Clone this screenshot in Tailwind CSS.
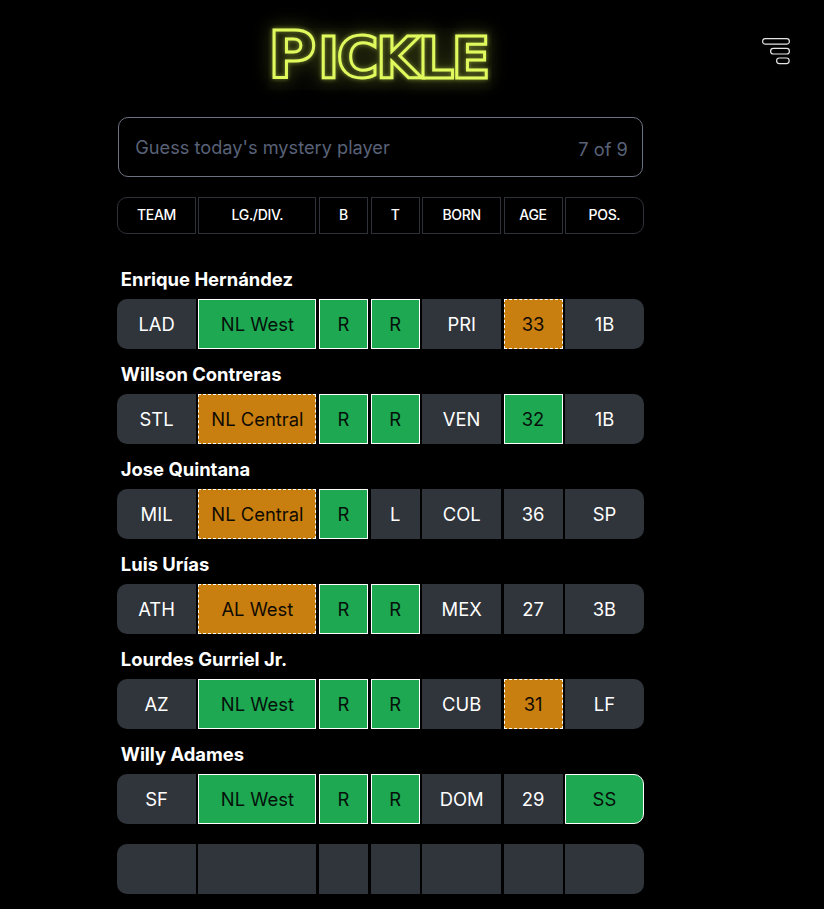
<!DOCTYPE html>
<html lang="en">
<head>
<meta charset="utf-8">
<title>Pickle</title>
<script src="https://cdn.jsdelivr.net/npm/@tailwindcss/browser@4"></script>
</head>
<body class="bg-black text-white font-['Inter','Lato',sans-serif] w-[824px] h-[909px] overflow-hidden">
<header class="relative h-[117px] w-full">
  <div class="absolute left-[268px] top-[28px] w-[224px] h-[62px] bg-[#050503]"></div>
  <div class="absolute left-[266px] top-[28px] w-[224px] h-[62px] flex items-baseline justify-center font-['DejaVu_Sans',sans-serif] font-bold leading-[56px] text-transparent [-webkit-text-stroke:3px_#e0fa5e] [filter:drop-shadow(0_0_2px_rgba(220,247,92,0.5))_drop-shadow(0_0_9px_rgba(200,230,60,0.45))]">
    <span class="text-[66px] tracking-[1.5px]">P</span><span class="text-[57px] tracking-[-2.5px]">ICKLE</span>
  </div>
  <svg class="absolute left-[761px] top-[37px]" width="30" height="30" viewBox="0 0 30 30" fill="none" stroke="#e5e5e5" stroke-width="1.2">
    <rect x="1.6" y="1.6" width="26.8" height="5.6" rx="2.8"/>
    <rect x="9.6" y="11.4" width="18.8" height="5.6" rx="2.8"/>
    <rect x="15.6" y="21" width="12.6" height="5.6" rx="2.8"/>
  </svg>
</header>
<main class="ml-[117.3px] w-[526.4px]">
  <div class="ml-[1px] w-[524.5px] h-[60px] border border-[#6b7280] rounded-[10px] flex items-center justify-between pl-4 pr-[14px] text-[18.2px] leading-[28px] text-[#596278]">
    <span>Guess today's mystery player</span>
    <span class="pt-[3px]">7 of 9</span>
  </div>

  <div class="grid grid-cols-[8fr_12fr_5fr_5fr_8fr_6fr_8fr] gap-[2.66px] h-[37px] mt-[20px] text-[14px] tracking-[-0.3px] font-medium">
    <div class="flex items-center justify-center pb-[2px] border border-[#2e3238] rounded-l-[10px]">TEAM</div>
    <div class="flex items-center justify-center pb-[2px] border border-[#2e3238]">LG./DIV.</div>
    <div class="flex items-center justify-center pb-[2px] border border-[#2e3238]">B</div>
    <div class="flex items-center justify-center pb-[2px] border border-[#2e3238]">T</div>
    <div class="flex items-center justify-center pb-[2px] border border-[#2e3238]">BORN</div>
    <div class="flex items-center justify-center pb-[2px] border border-[#2e3238]">AGE</div>
    <div class="flex items-center justify-center pb-[2px] border border-[#2e3238] rounded-r-[10px]">POS.</div>
  </div>

  <div class="mt-[32px] flex flex-col gap-[12px]">
    <section>
      <h2 class="h-[27px] pl-[3.5px] text-[18.4px] leading-[27px] font-bold">Enrique Hernández</h2>
      <div class="grid grid-cols-[8fr_12fr_5fr_5fr_8fr_6fr_8fr] gap-[2.66px] h-[50px] mt-[6px] text-[18.4px] leading-[28px]">
        <div class="flex items-center justify-center bg-[#30343b] rounded-l-[10px]">LAD</div>
        <div class="flex items-center justify-center bg-[#1da851] border border-white text-[#06100a]">NL West</div>
        <div class="flex items-center justify-center bg-[#1da851] border border-white text-[#06100a]">R</div>
        <div class="flex items-center justify-center bg-[#1da851] border border-white text-[#06100a]">R</div>
        <div class="flex items-center justify-center bg-[#30343b]">PRI</div>
        <div class="flex items-center justify-center bg-[#c97f10] border border-dashed border-white text-[#100b02]">33</div>
        <div class="flex items-center justify-center bg-[#30343b] rounded-r-[10px]">1B</div>
      </div>
    </section>
    <section>
      <h2 class="h-[27px] pl-[3.5px] text-[18.4px] leading-[27px] font-bold">Willson Contreras</h2>
      <div class="grid grid-cols-[8fr_12fr_5fr_5fr_8fr_6fr_8fr] gap-[2.66px] h-[50px] mt-[6px] text-[18.4px] leading-[28px]">
        <div class="flex items-center justify-center bg-[#30343b] rounded-l-[10px]">STL</div>
        <div class="flex items-center justify-center bg-[#c97f10] border border-dashed border-white text-[#100b02]">NL Central</div>
        <div class="flex items-center justify-center bg-[#1da851] border border-white text-[#06100a]">R</div>
        <div class="flex items-center justify-center bg-[#1da851] border border-white text-[#06100a]">R</div>
        <div class="flex items-center justify-center bg-[#30343b]">VEN</div>
        <div class="flex items-center justify-center bg-[#1da851] border border-white text-[#06100a]">32</div>
        <div class="flex items-center justify-center bg-[#30343b] rounded-r-[10px]">1B</div>
      </div>
    </section>
    <section>
      <h2 class="h-[27px] pl-[3.5px] text-[18.4px] leading-[27px] font-bold">Jose Quintana</h2>
      <div class="grid grid-cols-[8fr_12fr_5fr_5fr_8fr_6fr_8fr] gap-[2.66px] h-[50px] mt-[6px] text-[18.4px] leading-[28px]">
        <div class="flex items-center justify-center bg-[#30343b] rounded-l-[10px]">MIL</div>
        <div class="flex items-center justify-center bg-[#c97f10] border border-dashed border-white text-[#100b02]">NL Central</div>
        <div class="flex items-center justify-center bg-[#1da851] border border-white text-[#06100a]">R</div>
        <div class="flex items-center justify-center bg-[#30343b]">L</div>
        <div class="flex items-center justify-center bg-[#30343b]">COL</div>
        <div class="flex items-center justify-center bg-[#30343b]">36</div>
        <div class="flex items-center justify-center bg-[#30343b] rounded-r-[10px]">SP</div>
      </div>
    </section>
    <section>
      <h2 class="h-[27px] pl-[3.5px] text-[18.4px] leading-[27px] font-bold">Luis Urías</h2>
      <div class="grid grid-cols-[8fr_12fr_5fr_5fr_8fr_6fr_8fr] gap-[2.66px] h-[50px] mt-[6px] text-[18.4px] leading-[28px]">
        <div class="flex items-center justify-center bg-[#30343b] rounded-l-[10px]">ATH</div>
        <div class="flex items-center justify-center bg-[#c97f10] border border-dashed border-white text-[#100b02]">AL West</div>
        <div class="flex items-center justify-center bg-[#1da851] border border-white text-[#06100a]">R</div>
        <div class="flex items-center justify-center bg-[#1da851] border border-white text-[#06100a]">R</div>
        <div class="flex items-center justify-center bg-[#30343b]">MEX</div>
        <div class="flex items-center justify-center bg-[#30343b]">27</div>
        <div class="flex items-center justify-center bg-[#30343b] rounded-r-[10px]">3B</div>
      </div>
    </section>
    <section>
      <h2 class="h-[27px] pl-[3.5px] text-[18.4px] leading-[27px] font-bold">Lourdes Gurriel Jr.</h2>
      <div class="grid grid-cols-[8fr_12fr_5fr_5fr_8fr_6fr_8fr] gap-[2.66px] h-[50px] mt-[6px] text-[18.4px] leading-[28px]">
        <div class="flex items-center justify-center bg-[#30343b] rounded-l-[10px]">AZ</div>
        <div class="flex items-center justify-center bg-[#1da851] border border-white text-[#06100a]">NL West</div>
        <div class="flex items-center justify-center bg-[#1da851] border border-white text-[#06100a]">R</div>
        <div class="flex items-center justify-center bg-[#1da851] border border-white text-[#06100a]">R</div>
        <div class="flex items-center justify-center bg-[#30343b]">CUB</div>
        <div class="flex items-center justify-center bg-[#c97f10] border border-dashed border-white text-[#100b02]">31</div>
        <div class="flex items-center justify-center bg-[#30343b] rounded-r-[10px]">LF</div>
      </div>
    </section>
    <section>
      <h2 class="h-[27px] pl-[3.5px] text-[18.4px] leading-[27px] font-bold">Willy Adames</h2>
      <div class="grid grid-cols-[8fr_12fr_5fr_5fr_8fr_6fr_8fr] gap-[2.66px] h-[50px] mt-[6px] text-[18.4px] leading-[28px]">
        <div class="flex items-center justify-center bg-[#30343b] rounded-l-[10px]">SF</div>
        <div class="flex items-center justify-center bg-[#1da851] border border-white text-[#06100a]">NL West</div>
        <div class="flex items-center justify-center bg-[#1da851] border border-white text-[#06100a]">R</div>
        <div class="flex items-center justify-center bg-[#1da851] border border-white text-[#06100a]">R</div>
        <div class="flex items-center justify-center bg-[#30343b]">DOM</div>
        <div class="flex items-center justify-center bg-[#30343b]">29</div>
        <div class="flex items-center justify-center bg-[#1da851] border border-white text-[#06100a] rounded-r-[10px]">SS</div>
      </div>
    </section>
  </div>

  <div class="grid grid-cols-[8fr_12fr_5fr_5fr_8fr_6fr_8fr] gap-[2.66px] h-[50px] mt-[20px]">
    <div class="bg-[#30343b] rounded-l-[10px]"></div>
    <div class="bg-[#30343b]"></div>
    <div class="bg-[#30343b]"></div>
    <div class="bg-[#30343b]"></div>
    <div class="bg-[#30343b]"></div>
    <div class="bg-[#30343b]"></div>
    <div class="bg-[#30343b] rounded-r-[10px]"></div>
  </div>
</main>
</body>
</html>
